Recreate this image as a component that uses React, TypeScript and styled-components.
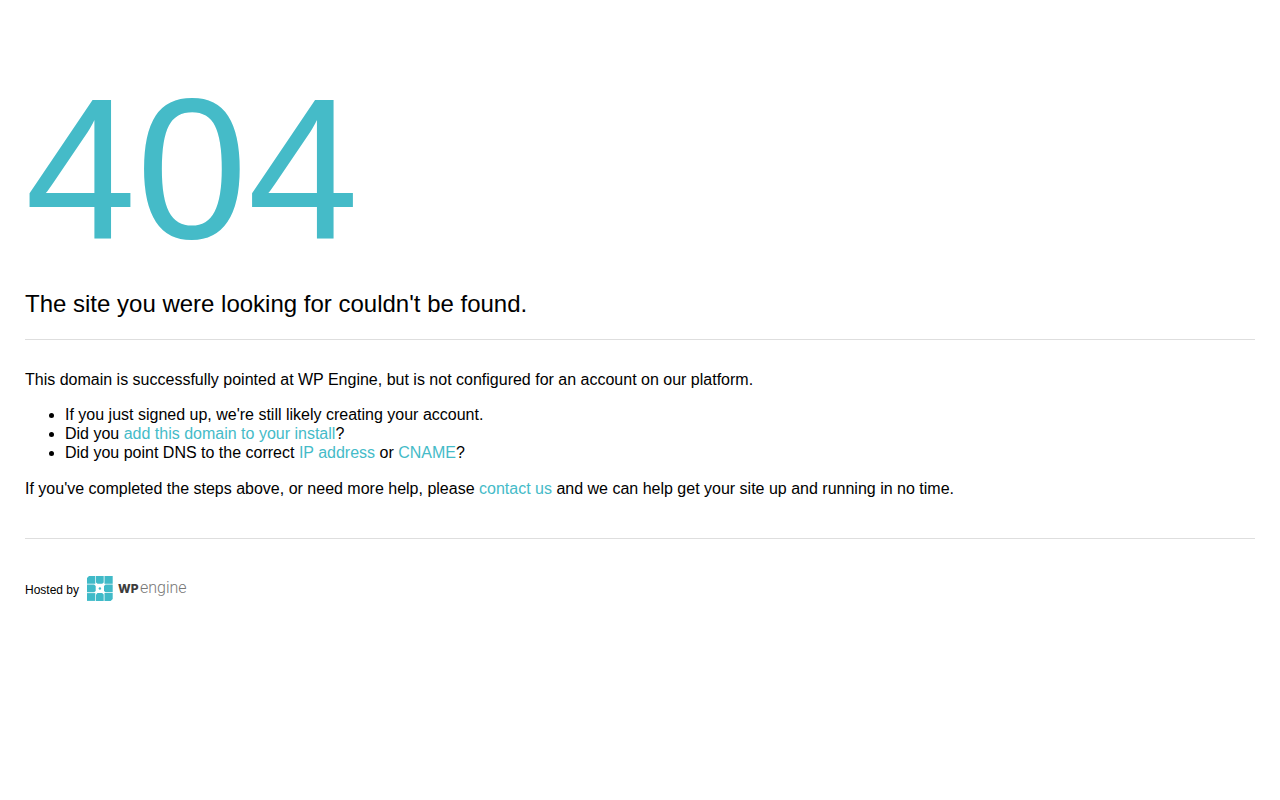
import React from 'react';
import styled, { createGlobalStyle } from 'styled-components';

const teal = '#45bbc8';

const GlobalStyle = createGlobalStyle`
  body {
    margin: 0;
    background: #fff;
    color: #000;
    font-family: "Liberation Sans", Arial, Helvetica, sans-serif;
    font-size: 16px;
    line-height: 19px;
  }
`;

const Page = styled.div`
  padding: 69px 25px 25px;
`;

const Header = styled.header`
  padding-bottom: 21px;
  border-bottom: 1px solid #dedede;
`;

const Code = styled.h1`
  margin: 0 0 21px;
  color: ${teal};
  font-size: 200px;
  font-weight: 400;
  line-height: 200px;
`;

const Subtitle = styled.h2`
  margin: 0;
  font-size: 24px;
  font-weight: 400;
  line-height: 28px;
`;

const Content = styled.main`
  padding: 30px 0 40px;
  border-bottom: 1px solid #dedede;
`;

const Paragraph = styled.p`
  margin: 0;
`;

const Steps = styled.ul`
  margin: 16px 0 17px;
  padding: 0 0 0 40px;
`;

const Link = styled.a`
  color: ${teal};
  text-decoration: none;
`;

const Footer = styled.footer`
  display: flex;
  align-items: flex-end;
  gap: 8px;
  padding-top: 36px;
  font-size: 12px;
`;

const HostedBy = styled.span`
  padding-bottom: 3px;
`;

const LogoLink = styled.a`
  display: flex;
`;

const Logo = () => (
  <svg width="102" height="28" viewBox="0 0 102 28" role="img" aria-label="WP Engine">
    <g fill="#40bac8">
      <path d="M2 1h6.300v7.800H0V3z" />
      <path d="M9 1h7.700v6.500l-1.500 1.300h-4.700L9 7.500z" />
      <path d="M17.500 1h8.200v7.800h-8.200z" />
      <path d="M0 9.600h7.200L8.700 11v5l-1.500 1.300H0z" />
      <path d="M25.700 9.600h-7.200L17 11v5l1.500 1.300h7.200z" />
      <path d="M0 18.100h8.300v7.800H0z" />
      <path d="M9 25.900h7.700v-6.500l-1.500-1.300h-4.700L9 19.400z" />
      <path d="M17.500 18.100h8.200v5.800l-2 2h-6.200z" />
      <circle cx="12.900" cy="13.500" r="1.200" />
    </g>
    <text x="31" y="18" fill="#3d3d3d" fontFamily="Inter, sans-serif" fontSize="12" fontWeight="800">WP</text>
    <text x="53" y="18" fill="#777" fontFamily="Roboto, sans-serif" fontSize="16" fontWeight="300">engine</text>
  </svg>
);

export default function App() {
  return (
    <Page>
      <GlobalStyle />
      <Header>
        <Code>404</Code>
        <Subtitle>The site you were looking for couldn't be found.</Subtitle>
      </Header>
      <Content>
        <Paragraph>
          This domain is successfully pointed at WP Engine, but is not configured for an account on our platform.
        </Paragraph>
        <Steps>
          <li>If you just signed up, we're still likely creating your account.</li>
          <li>Did you <Link href="#install">add this domain to your install</Link>?</li>
          <li>
            Did you point DNS to the correct <Link href="#ip">IP address</Link> or <Link href="#cname">CNAME</Link>?
          </li>
        </Steps>
        <Paragraph>
          If you've completed the steps above, or need more help, please <Link href="#contact">contact us</Link> and we
          can help get your site up and running in no time.
        </Paragraph>
      </Content>
      <Footer>
        <HostedBy>Hosted by</HostedBy>
        <LogoLink href="#wpengine">
          <Logo />
        </LogoLink>
      </Footer>
    </Page>
  );
}
